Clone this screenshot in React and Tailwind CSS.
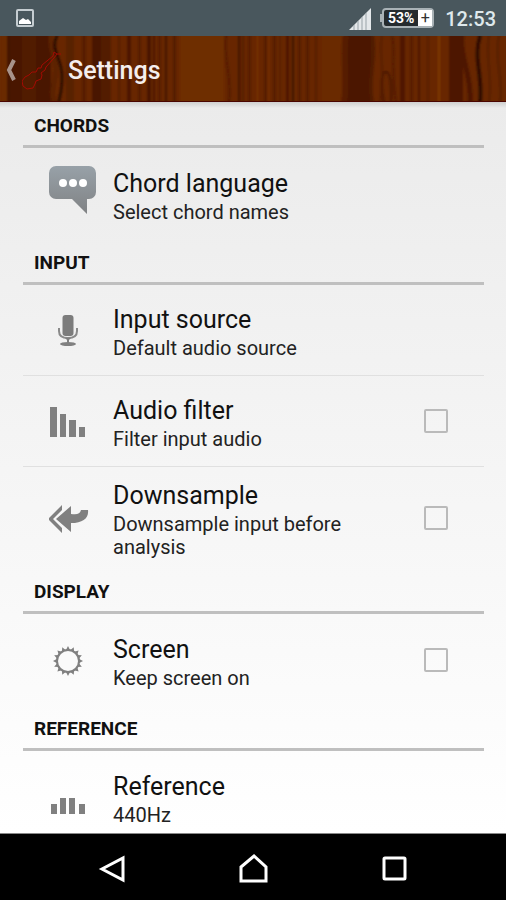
import React from 'react';

// Wood grain: [x, width, color]
const grain = [
  [0, 8, '#6b2c02'],
  [7, 3, '#421200'],
  [10, 41, '#4a1600'],
  [22, 14, '#511a01'],
  [66, 8, '#592001'],
  [82, 4, '#571d00'],
  [92, 9, '#491500'],
  [101, 10, '#521b00'],
  [118, 2, '#531c00'],
  [127, 4, '#4e1800'],
  [138, 3, '#551d00'],
  [147, 4, '#491500'],
  [153, 2, '#4b1700'],
  [158, 3, '#571e01'],
  [165, 2, '#3d1000'],
  [173, 3, '#521b00'],
  [180, 44, '#6e2d02'],
  [238, 2, '#3a0f00'],
  [242, 2, '#521b00'],
  [248, 3, '#561d00'],
  [257, 1, '#7f3906'],
  [264, 3, '#551d01'],
  [268, 1, '#7a3505'],
  [273, 3, '#551d01'],
  [279, 2, '#5a2001'],
  [286, 3, '#4d1800'],
  [292, 2, '#340c00'],
  [298, 3, '#551d01'],
  [306, 3, '#551d01'],
  [315, 2, '#551d01'],
  [322, 20, '#6b2a02'],
  [347, 24, '#4b1700'],
  [400, 5, '#4f1900'],
  [410, 3, '#571e01'],
  [418, 2, '#4b1700'],
  [427, 2, '#571e01'],
  [438, 2, '#7f3906'],
  [449, 14, '#4e1900'],
];

const waves = [
  ['M51 0C50 15 56 22 56 34S50 52 54 66', 5, '#5c2301'],
  ['M57 0C50 14 62 22 62 40S60 56 59 66', 3, '#2c0900'],
  ['M226 0C223 20 232 40 229 66', 3, '#581f01'],
  ['M346 0C342 18 348 44 344 66', 6, '#561d01'],
  ['M372 0C377 20 367 40 372 66', 4, '#511a00'],
  ['M382 0C378 20 386 26 380 66', 2, '#591f01'],
  ['M392 0C396 16 390 26 396 66', 3, '#591f01'],
  ['M384 66C380 46 382 36 386 36S392 48 391 66', 3, '#531b00'],
  ['M462 0C459 20 472 38 470 66', 5, '#4e1800'],
  ['M480 0C473 22 483 40 480 66', 4, '#2e0a00'],
  ['M489 0C485 22 493 42 489 66', 2, '#571e01'],
  ['M499 0C494 22 503 42 500 66', 2, '#541c00'],
];

const WoodGrain = () => (
  <svg
    className="absolute inset-0 h-full w-full"
    viewBox="0 0 506 66"
    preserveAspectRatio="none"
    aria-hidden="true"
  >
    <defs>
      <filter id="soften" x="0" y="0" width="1" height="1">
        <feGaussianBlur stdDeviation="1 0" />
      </filter>
    </defs>
    <rect width="506" height="66" fill="#672802" />
    <g filter="url(#soften)">
      <rect width="506" height="66" fill="#672802" />
      {grain.map(([x, w, color]) => (
        <rect key={x} x={x} width={w} height="66" fill={color} />
      ))}
      {waves.map(([d, w, color]) => (
        <path key={d} d={d} stroke={color} strokeWidth={w} fill="none" />
      ))}
    </g>
    <rect y="65" width="506" height="1" fill="#4a0500" />
  </svg>
);

const GuitarLogo = () => (
  <svg width="40" height="40" viewBox="0 0 40 40" fill="none" stroke="#a30a03" strokeWidth="1" strokeLinejoin="round" aria-hidden="true">
    <path d="M31 5L20 14l-1 3-3 0-2 4-4 0-3 3-4 2-3 4 1 5 4 3 6-1 2-4 1-3 5-2 1-4-1-2 4-3 1-3L32 7" />
    <path d="M31 5l1-4 3 2 4 0M32 7l3-4" />
  </svg>
);

const ChatIcon = () => (
  <svg className="mb-[10px]" width="48" height="48" viewBox="0 0 48 48" aria-hidden="true">
    <defs>
      <linearGradient id="bubble" x1="0" y1="0" x2="0" y2="1">
        <stop offset="0" stopColor="#98a1a8" />
        <stop offset="1" stopColor="#808284" />
      </linearGradient>
    </defs>
    <path d="M7 0h33a7 7 0 0 1 7 7v19a7 7 0 0 1-7 7h-2v15L23 33H7a7 7 0 0 1-7-7V7a7 7 0 0 1 7-7z" fill="url(#bubble)" />
    <circle cx="14" cy="17" r="4" fill="#fff" />
    <circle cx="24" cy="17" r="4" fill="#fff" />
    <circle cx="34" cy="17" r="4" fill="#fff" />
  </svg>
);

const MicIcon = () => (
  <svg width="38" height="48" viewBox="0 0 38 48" aria-hidden="true">
    <rect x="13.5" y="8" width="11" height="21" rx="3" fill="#7c7c7c" />
    <path d="M9 22h2M27 22h2M10 22v2c0 5 4 7 9 7s9-2 9-7v-2" fill="none" stroke="#8a8a8a" strokeWidth="2" />
    <path d="M16 31h6l-2 2v3h-2v-3z" fill="#808080" />
    <ellipse cx="19" cy="37" rx="8" ry="2" fill="#808080" />
  </svg>
);

const FilterIcon = () => (
  <svg width="38" height="48" viewBox="0 0 38 48" fill="#808080" aria-hidden="true">
    <path d="M1 9h7v30H1zM11 16h6v23h-6zM20 22h7v17h-7zM30 29h6v10h-6z" />
  </svg>
);

const DownsampleIcon = () => (
  <svg width="40" height="48" viewBox="0 0 40 48" fill="#808080" aria-hidden="true">
    <path d="M13 10v5L4 24l9 9v5L-1 24z" />
    <path d="M22 11v8c6 1 9 0 10-4h7c1 8-5 13-17 13v9L7 24z" />
  </svg>
);

const TEETH = 16;
const gearPoints = Array.from({ length: TEETH * 2 }, (_, i) => {
  const r = i % 2 === 0 ? 15 : 11;
  const a = (i * Math.PI) / TEETH - Math.PI / 2;
  return `${19 + r * Math.cos(a)},${24 + r * Math.sin(a)}`;
}).join(' ');

const GearIcon = () => (
  <svg width="38" height="48" viewBox="0 0 38 48" aria-hidden="true">
    <polygon points={gearPoints} fill="#808080" />
    <circle cx="19" cy="24" r="11" fill="none" stroke="#808080" strokeWidth="2" />
    <circle cx="19" cy="24" r="10" fill="#fafafa" />
  </svg>
);

const ReferenceIcon = () => (
  <svg width="38" height="48" viewBox="0 0 38 48" fill="#808080" aria-hidden="true">
    <path d="M2 30h6v10H2zM11 24h6v16h-6zM20 24h6v16h-6zM30 30h6v10h-6z" />
  </svg>
);

const sections = [
  {
    title: 'CHORDS',
    items: [{ id: 'language', icon: ChatIcon, title: 'Chord language', summary: 'Select chord names' }],
  },
  {
    title: 'INPUT',
    items: [
      { id: 'source', icon: MicIcon, title: 'Input source', summary: 'Default audio source' },
      { id: 'filter', icon: FilterIcon, title: 'Audio filter', summary: 'Filter input audio', checkbox: true },
      { id: 'downsample', icon: DownsampleIcon, title: 'Downsample', summary: 'Downsample input before analysis', checkbox: true },
    ],
  },
  {
    title: 'DISPLAY',
    items: [{ id: 'screen', icon: GearIcon, title: 'Screen', summary: 'Keep screen on', checkbox: true }],
  },
  {
    title: 'REFERENCE',
    items: [{ id: 'reference', icon: ReferenceIcon, title: 'Reference', summary: '440Hz' }],
  },
];

const rowClass = 'flex w-full items-center py-[9px] pl-[26px] pr-9 text-left';

const RowContent = ({ icon: Icon, title, summary }) => (
  <>
    <span className="w-16 shrink-0 pt-[2px]">
      <Icon />
    </span>
    <span className="min-w-0 flex-1 pr-6 pt-[2px]">
      <span className="block text-[25px] leading-[35px]">{title}</span>
      <span className="block text-[20px] leading-[23px] text-[#222]">{summary}</span>
    </span>
  </>
);

const SettingRow = ({ item }) =>
  item.checkbox ? (
    <label htmlFor={item.id} className={rowClass}>
      <RowContent {...item} />
      <input
        id={item.id}
        type="checkbox"
        className="size-6 shrink-0 appearance-none rounded-xs border-2 border-[#bababa] bg-transparent checked:bg-[#808080]"
      />
    </label>
  ) : (
    <button type="button" className={rowClass}>
      <RowContent {...item} />
    </button>
  );

const StatusBar = () => (
  <div className="flex h-9 shrink-0 items-center bg-[#49575d] pl-4 pr-[10px] text-[#dfe9ec]">
    <svg width="18" height="18" viewBox="0 0 18 18" aria-hidden="true">
      <rect x="1" y="1" width="16" height="16" rx="1" fill="none" stroke="#c5cdd1" strokeWidth="2" />
      <path d="M3 15v-3l4-3 3 2 2-1 3 3v2z" fill="#fff" />
    </svg>
    <svg className="ml-auto mt-[2px]" width="22" height="22" viewBox="0 0 22 22" aria-hidden="true">
      <path d="M0 22L22 0v22z" fill="#e4e8ea" />
      <path d="M5 17v5M9 13v9M13 9v13M17 5v17" stroke="#98a2a7" strokeWidth="1" />
    </svg>
    <div className="ml-[9px] flex items-center">
      <span className="h-2 w-[2px] bg-[#a9b2b6]" />
      <div className="flex h-5 items-center rounded-sm border-2 border-[#a9b2b6] bg-[#252b2e]">
        <span className="w-[34px] text-center text-sm font-bold leading-4 text-white">53%</span>
        <span className="h-4 w-[14px] bg-white text-center text-base leading-4 text-[#333]">+</span>
      </div>
    </div>
    <span className="ml-[11px] pt-[2px] text-xl font-medium">12:53</span>
  </div>
);

const App = () => {
  return (
    <div className="flex h-screen flex-col overflow-hidden bg-white font-['Roboto','Liberation_Sans',sans-serif] text-[#111]">
      <StatusBar />

      <header className="relative flex h-[66px] shrink-0 items-center pt-1">
        <WoodGrain />
        <button type="button" aria-label="Back" className="relative flex items-center pl-1">
          <svg width="18" height="24" viewBox="0 0 18 24" aria-hidden="true">
            <path d="M10 1L5 11l5 10" fill="none" stroke="#a8938a" strokeWidth="4" />
          </svg>
          <GuitarLogo />
        </button>
        <h1 className="relative ml-[6px] text-[25px] font-medium text-[#f4eeee]">Settings</h1>
      </header>

      {/* Settings list */}
      <main className="min-h-0 flex-1 overflow-hidden bg-linear-to-b from-[#ebebeb] to-white">
        <div className="h-[6px] bg-linear-to-b from-[#cfcfcf] to-transparent" />
        <div className="-mt-[6px] pl-[23px] pr-[22px]">
          {sections.map((section) => (
            <section key={section.title}>
              <h2 className="flex h-[46px] items-center border-b-3 border-[#bfbfbf] px-[11px] pt-[6px] text-[19px] font-bold">
                {section.title}
              </h2>
              <ul className="divide-y divide-[#e0e0e0]">
                {section.items.map((item) => (
                  <li key={item.id} className="flex min-h-[91px] items-center">
                    <SettingRow item={item} />
                  </li>
                ))}
              </ul>
            </section>
          ))}
        </div>
      </main>

      {/* Navigation bar */}
      <nav className="flex h-[67px] shrink-0 items-center justify-around border-t border-[#888] bg-black px-[42px] pt-1">
        <button type="button" aria-label="Back">
          <svg width="28" height="30" viewBox="0 0 28 30" fill="none" stroke="#fff" strokeWidth="3" aria-hidden="true">
            <path d="M25 4v22L4 15z" />
          </svg>
        </button>
        <button type="button" aria-label="Home">
          <svg width="30" height="30" viewBox="0 0 30 30" fill="none" stroke="#fff" strokeWidth="3" aria-hidden="true">
            <path d="M3 13L16 2l12 11v14H3z" />
          </svg>
        </button>
        <button type="button" aria-label="Recent apps">
          <svg width="28" height="30" viewBox="0 0 28 30" fill="none" stroke="#fff" strokeWidth="3" aria-hidden="true">
            <rect x="4" y="4" width="21" height="21" rx="1" />
          </svg>
        </button>
      </nav>
    </div>
  );
};

export default App;
